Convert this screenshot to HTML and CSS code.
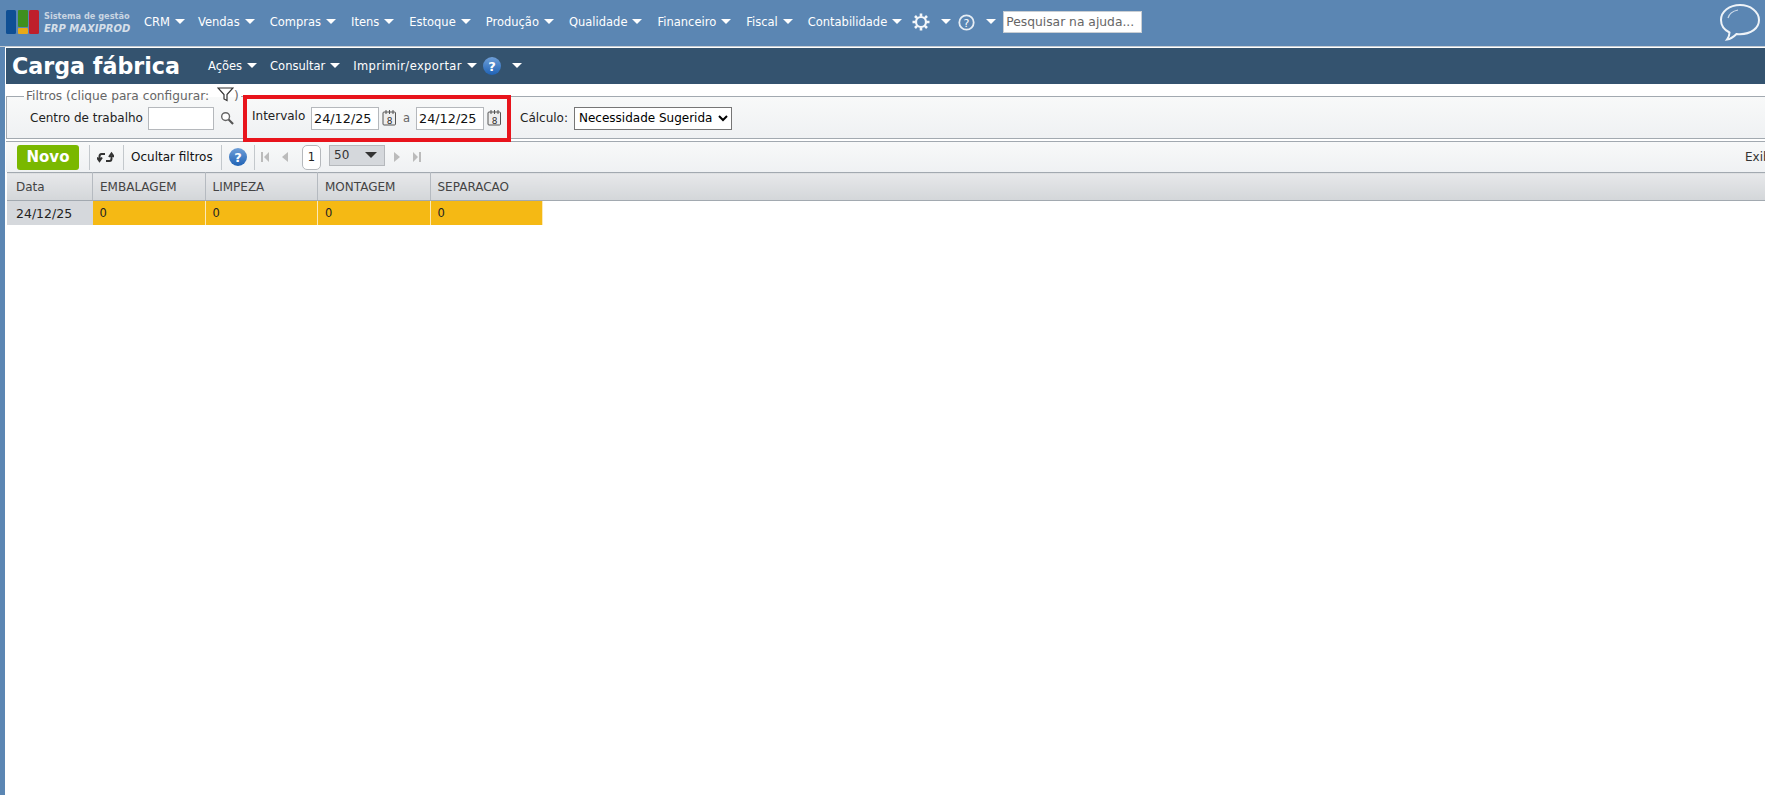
FILE: index.html
```html
<!doctype html>
<html>
    <head>
        <meta charset="utf-8">
        <title>Carga fábrica</title>
        <link rel="stylesheet" href="styles.css">
    </head>
    <body>
        <div class="top_bar">
            <div class="logo">
                <svg width="33" height="24" viewBox="0 0 33 24">
                    <rect x="0" y="0" width="10" height="24" rx="1.500" fill="#0f4f94"/>
                    <rect x="12" y="0" width="10" height="17" rx="1" fill="#3f8f1f"/>
                    <rect x="12" y="18" width="10" height="6" rx="1" fill="#e8a917"/>
                    <rect x="23" y="0" width="10" height="24" rx="1.500" fill="#bf1f2b"/>
                </svg>
                <div class="logo_text">
                    <div class="logo_small">Sistema de gestão</div>
                    <div class="logo_big">ERP MAXIPROD</div>
                </div>
            </div>
            <ul class="main_menu">
                <li>CRM<i class="caret"></i></li>
                <li>Vendas<i class="caret"></i></li>
                <li>Compras<i class="caret"></i></li>
                <li>Itens<i class="caret"></i></li>
                <li>Estoque<i class="caret"></i></li>
                <li>Produção<i class="caret"></i></li>
                <li>Qualidade<i class="caret"></i></li>
                <li>Financeiro<i class="caret"></i></li>
                <li>Fiscal<i class="caret"></i></li>
                <li class="last_text_item">Contabilidade<i class="caret"></i></li>
                <li class="icon_item">
                    <svg width="18" height="18" viewBox="0 0 18 18">
                        <circle cx="9" cy="9" r="5" fill="none" stroke="#f4f7fa" stroke-width="2.200"/>
                        <path d="M9 .500v3M9 14.500v3M.500 9h3M14.500 9h3M3 3l2.100 2.100M12.900 12.900L15 15M15 3l-2.100 2.100M5.100 12.900L3 15" stroke="#f4f7fa" stroke-width="2.600"/>
                    </svg>
                    <i class="caret caret_wide"></i>
                </li>
                <li class="icon_item">
                    <svg width="17" height="17" viewBox="0 0 17 17">
                        <circle cx="8.500" cy="8.500" r="7.200" fill="none" stroke="#e6edf4" stroke-width="1.800"/>
                        <text x="8.500" y="12.500" class="help_mark">?</text>
                    </svg>
                    <i class="caret caret_wide"></i>
                </li>
            </ul>
            <input class="help_search" type="text" placeholder="Pesquisar na ajuda...">
            <svg class="chat_icon" width="42" height="39" viewBox="0 0 42 39">
                <path d="M21 2C10.500 2 2 8.500 2 17c0 5.500 3.500 10 8.500 12.500 0 2.500-1 5-2.500 7 3.500-.5 7-3 9.500-5.500 1 .1 2.500.2 3.500.2 11 0 19-6 19-14.200S31.500 2 21 2z" fill="none" stroke="#eef3f8" stroke-width="2"/>
                <path d="M9 15c1-4 5-7 10-8" fill="none" stroke="#cfdceb" stroke-width="1.200"/>
            </svg>
        </div>

        <div class="page">
            <div class="title_bar">
                <h1>Carga fábrica</h1>
                <ul class="page_menu">
                    <li>Ações<i class="caret"></i></li>
                    <li>Consultar<i class="caret"></i></li>
                    <li class="print_item">Imprimir/exportar<i class="caret"></i></li>
                    <li class="page_help">
                        <svg class="help_ball" width="18" height="18" viewBox="0 0 18 18">
                            <defs>
                                <linearGradient id="ball_top" x1="0" y1="0" x2="0" y2="1">
                                    <stop offset="0" stop-color="#6f9fd8"/>
                                    <stop offset="1" stop-color="#1f62b5"/>
                                </linearGradient>
                            </defs>
                            <circle cx="9" cy="9" r="9" fill="url(#ball_top)"/>
                            <text x="9" y="13.500" class="help_ball_mark">?</text>
                        </svg>
                        <i class="caret caret_help"></i>
                    </li>
                </ul>
            </div>

            <fieldset class="filters">
                <legend>Filtros (clique para configurar:
                    <svg class="funnel" width="17" height="15" viewBox="0 0 17 15">
                        <path d="M1 1h15l-6 6.500v6l-3-1.500V7.500z" fill="none" stroke="#333" stroke-width="1.200"/>
                    </svg>)</legend>
                <div class="filter_row">
                    <label class="filter_label work_label">Centro de trabalho</label>
                    <input class="filter_input work_input" type="text">
                    <svg class="search_icon" width="14" height="14" viewBox="0 0 15 15">
                        <circle cx="6" cy="6" r="4.200" fill="#fff" stroke="#666" stroke-width="1.500"/>
                        <path d="M9.200 9.200L14 14" stroke="#555" stroke-width="2.200"/>
                    </svg>
                    <label class="filter_label range_label">Intervalo</label>
                    <input class="filter_input date_input" type="text" value="24/12/25">
                    <svg class="calendar" width="15" height="16" viewBox="0 0 15 16">
                        <rect x="1" y="2" width="12.500" height="13" rx="1" fill="#eee" stroke="#555"/>
                        <path d="M4 0v4M7.500 0v4M11 0v4" stroke="#555"/>
                        <text x="7.500" y="13.500" class="calendar_day">8</text>
                    </svg>
                    <span class="range_sep">a</span>
                    <input class="filter_input date_input" type="text" value="24/12/25">
                    <svg class="calendar" width="15" height="16" viewBox="0 0 15 16">
                        <rect x="1" y="2" width="12.500" height="13" rx="1" fill="#eee" stroke="#555"/>
                        <path d="M4 0v4M7.500 0v4M11 0v4" stroke="#555"/>
                        <text x="7.500" y="13.500" class="calendar_day">8</text>
                    </svg>
                    <label class="filter_label calc_label">Cálculo:</label>
                    <select class="calc_select">
                        <option>Necessidade Sugerida</option>
                    </select>
                </div>
            </fieldset>

            <div class="toolbar">
                <button class="new_button">Novo</button>
                <span class="tool_sep"></span>
                <svg class="refresh_icon" width="17" height="13" viewBox="0 0 17 13">
                    <path d="M8 3H4.500C3 3 2.500 4 2.500 5.500V8M0 6.500L2.500 10 5 6.500M9 10h3.500c1.500 0 2-1 2-2.500V4.500M12 6l2.500-3.500L17 6" fill="none" stroke="#333" stroke-width="2"/>
                </svg>
                <span class="tool_sep"></span>
                <span class="tool_text">Ocultar filtros</span>
                <span class="tool_sep"></span>
                <svg class="tool_help" width="18" height="18" viewBox="0 0 18 18">
                    <circle cx="9" cy="9" r="9" fill="url(#ball_top)"/>
                    <text x="9" y="13.500" class="help_ball_mark">?</text>
                </svg>
                <span class="tool_sep"></span>
                <svg class="pager_icon first_icon" width="8" height="10" viewBox="0 0 8 10"><path d="M0 0h2v10H0zM8 0v10L3 5z" fill="#bbb"/></svg>
                <svg class="pager_icon prev_icon" width="6" height="10" viewBox="0 0 6 10"><path d="M6 0v10L0 5z" fill="#bbb"/></svg>
                <span class="page_number">1</span>
                <div class="page_size">50<i class="size_caret"></i></div>
                <svg class="pager_icon next_icon" width="6" height="10" viewBox="0 0 6 10"><path d="M0 0v10l6-5z" fill="#bbb"/></svg>
                <svg class="pager_icon last_icon" width="8" height="10" viewBox="0 0 8 10"><path d="M8 0H6v10h2zM0 0v10l5-5z" fill="#bbb"/></svg>
                <span class="page_info">Exibindo</span>
            </div>

            <table class="grid" cellpadding="0" cellspacing="0">
                <thead>
                    <tr>
                        <th class="col_date">Data</th>
                        <th class="col_value">EMBALAGEM</th>
                        <th class="col_value">LIMPEZA</th>
                        <th class="col_value">MONTAGEM</th>
                        <th class="col_value col_last">SEPARACAO</th>
                        <th class="col_rest"></th>
                    </tr>
                </thead>
                <tbody>
                    <tr>
                        <td class="cell_date">24/12/25</td>
                        <td class="cell_value">0</td>
                        <td class="cell_value">0</td>
                        <td class="cell_value">0</td>
                        <td class="cell_value">0</td>
                        <td></td>
                    </tr>
                </tbody>
            </table>
        </div>

        <div class="highlight_box"></div>
    </body>
</html>
```

FILE: styles.css
```css
html, body {
    height:100%;
}

body {
    margin:0;
    display:flex;
    flex-direction:column;
    overflow:hidden;
    background-color:#5b86b3;
    font-family:"DejaVu Sans", sans-serif;
    font-size:11.500px;
    color:#222;
}

ul {
    list-style:none;
    margin:0;
    padding:0;
    display:flex;
}

.top_bar {
    flex:none;
    display:flex;
    align-items:center;
    box-sizing:border-box;
    height:47px;
    padding:0 0 2px 6px;
    border-bottom:1px solid #c4ccd4;
    color:#fff;
}

.logo {
    display:flex;
    align-items:center;
    width:138px;
}

.logo svg {
    margin-right:5px;
}

.logo_small {
    font-size:8.200px;
    font-weight:bold;
    color:#c9d5e2;
    white-space:nowrap;
}

.logo_big {
    font-size:10px;
    font-weight:bold;
    font-style:italic;
    color:#d5dfe9;
    margin-top:2px;
    white-space:nowrap;
}

.main_menu li {
    display:flex;
    align-items:center;
    margin-right:15px;
    white-space:nowrap;
}

.main_menu li:first-child {
    margin-right:13px;
}

.main_menu .last_text_item {
    margin-right:10px;
}

.caret {
    display:inline-block;
    margin-left:5px;
    margin-bottom:2px;
    border-left:5px solid transparent;
    border-right:5px solid transparent;
    border-top:5px solid #fff;
}

.main_menu .icon_item {
    width:46px;
    margin-right:0;
}

.caret_wide {
    margin-left:11px;
}

.help_mark {
    font-size:11px;
    text-anchor:middle;
    fill:#fff;
}

.help_search {
    box-sizing:border-box;
    width:139px;
    height:22px;
    margin-left:-1px;
    padding:0 2px;
    border:1px solid #c9ced3;
    font-family:inherit;
    font-size:12.300px;
}

.help_search::placeholder {
    color:#666;
}

.chat_icon {
    margin-left:auto;
    margin-right:4px;
}

.page {
    flex:1;
    margin-left:5px;
    padding-top:1px;
    background-color:#fff;
    overflow:hidden;
}

.title_bar {
    display:flex;
    align-items:center;
    height:36px;
    margin-left:1px;
    background-color:#34536f;
    color:#fff;
}

.title_bar h1 {
    width:202px;
    margin:0;
    padding-left:6px;
    box-sizing:border-box;
    font-size:22.200px;
    font-weight:bold;
}

.page_menu li {
    display:flex;
    align-items:center;
    margin-right:13px;
    white-space:nowrap;
}

.page_menu .print_item {
    margin-right:6px;
    letter-spacing:.400px;
}

.help_ball {
    margin-right:11px;
}

.caret_help {
    margin-left:0;
}

.help_ball_mark {
    font-size:13px;
    font-weight:bold;
    text-anchor:middle;
    fill:#fff;
}

.filters {
    box-sizing:border-box;
    height:50px;
    margin:5px -2px 0 1px;
    padding:0;
    border:0;
    border-top:1px solid #a2a9b0;
    border-left:1px solid #a2a9b0;
    border-bottom:1px solid #a2a9b0;
    background:linear-gradient(#f8f9f9, #eff1f3);
}

.filters legend {
    margin-left:17px;
    padding:0 2px;
    font-size:12.200px;
    color:#666;
    white-space:nowrap;
}

.funnel {
    vertical-align:-1px;
    margin:-5px 0 -1px 4px;
}

.filter_row {
    display:flex;
    align-items:center;
    height:24px;
    margin-top:3px;
}

.filter_label {
    font-size:12px;
    color:#222;
    white-space:nowrap;
}

.work_label {
    width:118px;
    margin-left:23px;
}

.filter_input {
    box-sizing:border-box;
    height:23px;
    padding:0 2px;
    border:1px solid #b5b8bc;
    background-color:#fff;
    font-family:inherit;
    font-size:12.800px;
    color:#111;
}

.work_input {
    width:66px;
}

.search_icon {
    margin-left:6px;
}

.range_label {
    width:59px;
    margin-left:18px;
    margin-top:-4px;
}

.date_input {
    width:68px;
}

.calendar {
    margin-left:3px;
}

.range_sep {
    width:19px;
    text-align:center;
    color:#666;
}

.calc_label {
    width:54px;
    margin-left:18px;
}

.calc_select {
    width:158px;
    height:23px;
    font-family:inherit;
    font-size:12px;
    background-color:#fff;
}

.toolbar {
    display:flex;
    align-items:center;
    box-sizing:border-box;
    height:31px;
    margin:2px -2px 0 1px;
    padding-left:11px;
    border-top:1px solid #a2a9b0;
    background:linear-gradient(#f8f9f9, #eff1f3);
}

.new_button {
    width:62px;
    height:25px;
    padding:0;
    border:0;
    border-radius:3px;
    background-color:#7ab800;
    color:#fff;
    font-family:inherit;
    font-size:15px;
    font-weight:bold;
}

.tool_sep {
    width:1px;
    height:25px;
    margin:0 8px 0 10px;
    background-color:#c3c8cc;
}

.refresh_icon {
    margin:0 -1px;
}

.tool_text {
    width:80px;
    margin-left:-1px;
    font-size:12px;
    white-space:nowrap;
    color:#111;
}

.tool_help {
    margin:0 -3px 0 -1px;
}

.pager_icon {
    flex:none;
}

.first_icon {
    margin-left:-2px;
}

.prev_icon {
    margin-left:13px;
}

.page_number {
    box-sizing:border-box;
    width:19px;
    height:25px;
    margin-left:14px;
    border:1px solid #b5b8bc;
    border-radius:5px;
    background-color:#fff;
    text-align:center;
    line-height:23px;
}

.page_size {
    display:flex;
    align-items:center;
    box-sizing:border-box;
    width:56px;
    height:21px;
    margin:-4px 0 0 8px;
    padding-left:4px;
    border:1px solid #b5b8bc;
    background-color:#d5d8dc;
    font-size:12px;
    color:#333;
}

.size_caret {
    margin-left:auto;
    margin-right:7px;
    border-left:6px solid transparent;
    border-right:6px solid transparent;
    border-top:6px solid #333;
}

.next_icon {
    margin-left:9px;
}

.last_icon {
    margin-left:13px;
}

.page_info {
    margin-left:auto;
    width:22px;
    overflow:hidden;
    white-space:nowrap;
    font-size:12px;
    color:#333;
}

.grid {
    width:calc(100% - 1px);
    margin-left:2px;
    border-collapse:collapse;
    table-layout:fixed;
}

.grid th {
    height:27px;
    padding:0 7px;
    border-top:1px solid #a2a9b0;
    border-bottom:1px solid #a2a9b0;
    border-right:1px solid #b5bac0;
    background:linear-gradient(#e7e8ea, #d3d6d9);
    font-size:12px;
    font-weight:normal;
    text-align:left;
    color:#444;
}

.grid th.col_rest, .grid th.col_last {
    border-right:0;
}

.grid .col_date {
    width:69px;
    padding-left:9px;
}

.col_value {
    width:97.500px;
}

.grid td {
    height:24px;
    padding:0 7px;
    color:#222;
}

.grid .cell_date {
    padding-left:9px;
    background-color:#d5d8dc;
    font-size:12.500px;
}

.grid .cell_value {
    border-right:1px solid #fbe9b8;
    background-color:#f5b914;
}

.highlight_box {
    position:absolute;
    left:243px;
    top:95px;
    width:268px;
    height:47px;
    box-sizing:border-box;
    border:4px solid #e8141c;
}

.calendar_day {
    font-size:9px;
    text-anchor:middle;
    fill:#333;
}
```
